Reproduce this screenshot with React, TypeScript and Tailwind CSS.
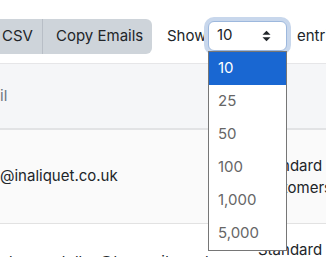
import React from "react";

const options = ["10", "25", "50", "100", "1,000", "5,000"];

function SortArrows() {
  return (
    <svg width="9" height="12" viewBox="0 0 9 12" className="fill-[#212529]">
      <polygon points="0.5,4.8 4.5,0.8 8.5,4.8" />
      <polygon points="0.5,7.2 4.5,11.2 8.5,7.2" />
    </svg>
  );
}

export default function App() {
  return (
    <div
      className="relative w-[326px] h-[257px] overflow-hidden bg-white text-[#212529] text-[15px]"
      style={{ fontFamily: "Inter, 'Noto Sans', sans-serif" }}
    >
      {/* toolbar */}
      <div className="flex items-center h-[63px] pt-[9px] whitespace-nowrap">
        <div className="flex shrink-0 h-[35px] -ml-[10px] rounded-r-[6px] bg-[#ced4da] overflow-hidden">
          <button className="shrink-0 w-[53px] pl-[12px] text-left border-r border-[#b8bec6]">CSV</button>
          <button className="shrink-0 w-[109px] pl-[13px] text-left">Copy Emails</button>
        </div>
        <span className="shrink-0 ml-[15px] w-[41px]">Show</span>
        <div className="relative shrink-0 w-[79px] h-[30px] -mt-[1px] rounded-[6px] border border-[#9db8dd] ring-4 ring-[#c8d7ec] bg-white flex items-center justify-between pl-[8px] pr-[15px]">
          <span>10</span>
          <SortArrows />
        </div>
        <span className="shrink-0 ml-[10px]">entries</span>
      </div>

      {/* table */}
      <div className="border-t border-[#e6e6e8] bg-[#f5f6f8] h-[67px] border-b-2 border-b-[#e2e3e5] flex items-center text-[#6c757d]">
        <span>il</span>
      </div>
      <div className="flex h-[94px] bg-[#fafafa] border-b border-[#e2e2e2] items-center whitespace-nowrap">
        <div className="shrink-0 w-[258px]">@inaliquet.co.uk</div>
        <div className="shrink-0 leading-[22px]">
          Standard
          <br />
          <span className="-ml-[3px]">Customers</span>
        </div>
      </div>
      <div className="flex pt-[15px] whitespace-nowrap">
        <div className="shrink-0 w-[258px] pt-[12px] leading-[22px]">ntesque.tellus@loremsit.co.uk</div>
        <div className="shrink-0 leading-[22px]">Standard</div>
      </div>

      {/* open dropdown */}
      <ul className="absolute left-[208px] top-[51px] w-[79px] bg-white border border-[#767676]">
        {options.map((o, i) => (
          <li
            key={o}
            className={
              i === 0
                ? "h-[33px] pl-[9px] flex items-center bg-[#1967d2] text-white"
                : "h-[33px] pl-[9px] flex items-center text-[#666]"
            }
          >
            {o}
          </li>
        ))}
      </ul>
    </div>
  );
}
